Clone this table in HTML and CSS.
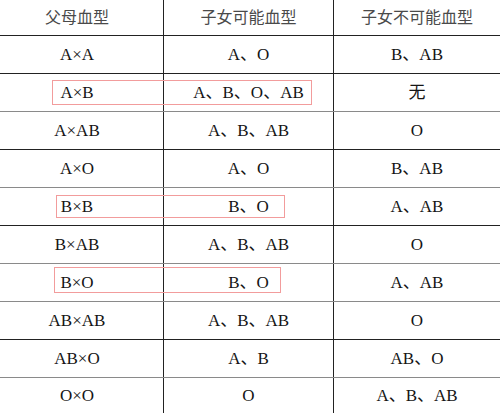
FILE: index.html
```html
<!DOCTYPE html>
<html lang="zh">
<head>
<meta charset="utf-8">
<link rel="stylesheet" href="styles.css">
</head>
<body>
<div class="sheet">
  <div class="row head">
    <div class="c c1">父母血型</div>
    <div class="c c2">子女可能血型</div>
    <div class="c c3">子女不可能血型</div>
  </div>
  <div class="row dark">
    <div class="c c1">A×A</div>
    <div class="c c2">A、O</div>
    <div class="c c3">B、AB</div>
  </div>
  <div class="row gray">
    <div class="c c1">A×B</div>
    <div class="c c2">A、B、O、AB</div>
    <div class="c c3">无</div>
  </div>
  <div class="row dark">
    <div class="c c1">A×AB</div>
    <div class="c c2">A、B、AB</div>
    <div class="c c3">O</div>
  </div>
  <div class="row gray">
    <div class="c c1">A×O</div>
    <div class="c c2">A、O</div>
    <div class="c c3">B、AB</div>
  </div>
  <div class="row dark">
    <div class="c c1">B×B</div>
    <div class="c c2">B、O</div>
    <div class="c c3">A、AB</div>
  </div>
  <div class="row gray">
    <div class="c c1">B×AB</div>
    <div class="c c2">A、B、AB</div>
    <div class="c c3">O</div>
  </div>
  <div class="row gray">
    <div class="c c1">B×O</div>
    <div class="c c2">B、O</div>
    <div class="c c3">A、AB</div>
  </div>
  <div class="row dark">
    <div class="c c1">AB×AB</div>
    <div class="c c2">A、B、AB</div>
    <div class="c c3">O</div>
  </div>
  <div class="row gray">
    <div class="c c1">AB×O</div>
    <div class="c c2">A、B</div>
    <div class="c c3">AB、O</div>
  </div>
  <div class="row last">
    <div class="c c1">O×O</div>
    <div class="c c2">O</div>
    <div class="c c3">A、B、AB</div>
  </div>
  <div class="mark m1"></div>
  <div class="mark m2"></div>
  <div class="mark m3"></div>
</div>
</body>
</html>
```
FILE: styles.css
```css
html, body {
  margin: 0;
  padding: 0;
  background: #fff;
}
.sheet {
  position: relative;
  width: 500px;
  height: 413px;
  overflow: hidden;
  font-family: "Liberation Serif", "Noto Sans CJK SC", serif;
  font-size: 17px;
  line-height: 20px;
  color: #151515;
}
.row {
  display: flex;
  height: 37px;
  border-bottom: 1px solid #222;
}
.row.head {
  height: 35px;
  color: #4a4a4a;
  font-size: 16px;
}
.row.gray {
  border-bottom-color: #8a8a8a;
}
.row.last {
  height: 35px;
  border-bottom: none;
}
.c {
  display: flex;
  align-items: center;
  justify-content: center;
  box-sizing: border-box;
}
.c1 {
  width: 164px;
  padding-right: 9px;
  border-right: 1px solid #222;
}
.c2 {
  width: 170px;
  border-right: 1px solid #222;
}
.c3 {
  flex: 1;
}
.mark {
  position: absolute;
  border: 1.5px solid #f29c9c;
  box-sizing: border-box;
}
.m1 { left: 52px; top: 80px; width: 260px; height: 25px; }
.m2 { left: 56px; top: 195px; width: 229px; height: 23px; }
.m3 { left: 54px; top: 267px; width: 227px; height: 26px; }
```
